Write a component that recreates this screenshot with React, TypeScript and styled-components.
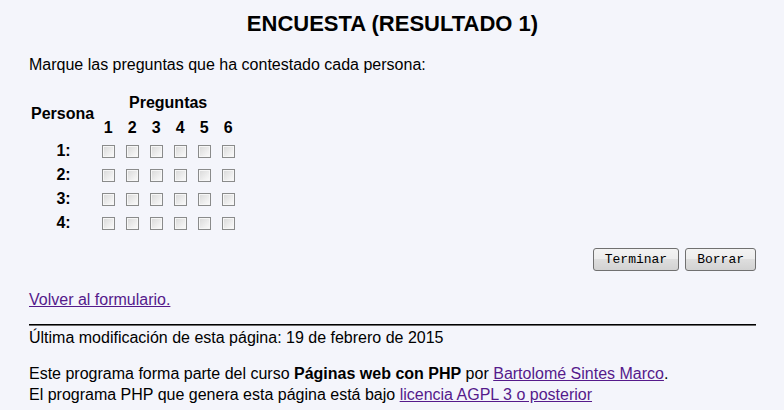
import React from "react";
import styled, { createGlobalStyle } from "styled-components";

const Global = createGlobalStyle`
  html, body { margin: 0; padding: 0; background: #f4f5fb; }
  body { font-family: "Liberation Sans", Arial, sans-serif; color: #000; }
`;

const Page = styled.div`
  padding: 0 28px 0 29px;
  font-size: 16px;
  line-height: 20px;
`;

const Title = styled.h1`
  margin: 0;
  padding-top: 12px;
  text-align: center;
  font-size: 22px;
  line-height: 24px;
  font-weight: bold;
`;

const Para = styled.p<{ $top?: number }>`
  margin: ${(p) => p.$top ?? 16}px 0 0 0;
  line-height: 20px;
`;

const Grid = styled.table`
  margin-top: 18px;
  margin-left: 0;
  border-collapse: separate;
  border-spacing: 0;
  font-weight: bold;
`;

const HeadCell = styled.th`
  padding: 0 0 5px 0;
  font-size: 16px;
  line-height: 20px;
  text-align: center;
  vertical-align: middle;
`;

const PersonaHead = styled.th`
  width: 63px;
  padding: 0 2px 4px 2px;
  font-size: 16px;
  line-height: 20px;
  text-align: center;
  vertical-align: middle;
`;

const NumCell = styled.th`
  width: 24px;
  padding: 0 0 1px 0;
  font-size: 16px;
  line-height: 20px;
  text-align: center;
`;

const RowLabel = styled.th`
  padding: 0 1px 0 3px;
  height: 24px;
  text-align: center;
  font-size: 16px;
`;

const BoxCell = styled.td`
  padding: 0;
  text-align: center;
  vertical-align: middle;
  height: 24px;
`;

const Check = styled.input.attrs({ type: "checkbox" })`
  appearance: none;
  -webkit-appearance: none;
  margin: 4px 0 0 0;
  width: 13px;
  height: 13px;
  box-sizing: border-box;
  border: 1px solid #8a8b8b;
  background: linear-gradient(135deg, #d8d8d8 0%, #ececec 55%, #fbfbfb 100%);
  box-shadow: inset 0 0 0 1px #f6f6f6;
  vertical-align: top;
`;

const Actions = styled.div`
  display: flex;
  justify-content: flex-end;
  gap: 6px;
  margin-top: 13px;
`;

const Button = styled.button`
  font-family: "Liberation Mono", "Courier New", monospace;
  font-size: 13px;
  height: 23px;
  padding: 0 11px;
  border: 1px solid #707070;
  border-radius: 3px;
  background: linear-gradient(#f3f3f3 0%, #ececec 50%, #dedede 50%, #d2d2d2 100%);
  color: #000;
`;

const Link = styled.a`
  color: #551a8b;
  text-decoration: underline;
`;

const Rule = styled.hr`
  margin: 14px 0 0 0;
  border: 0;
  border-top: 1px solid #000;
  box-shadow: 0 1px 0 #6a6a6a;
  height: 0;
`;

const Footer = styled.div`
  margin-top: 15px;
  line-height: 21px;
`;

export default function App() {
  const people = [1, 2, 3, 4];
  const qs = [1, 2, 3, 4, 5, 6];
  return (
    <>
      <Global />
      <Page>
        <Title>ENCUESTA (RESULTADO 1)</Title>
        <Para $top={19}>Marque las preguntas que ha contestado cada persona:</Para>
        <Grid>
          <thead>
            <tr>
              <PersonaHead rowSpan={2}>Persona</PersonaHead>
              <HeadCell colSpan={6}>Preguntas</HeadCell>
            </tr>
            <tr>
              {qs.map((q) => (
                <NumCell key={q}>{q}</NumCell>
              ))}
            </tr>
          </thead>
          <tbody>
            {people.map((p) => (
              <tr key={p}>
                <RowLabel>{p}:</RowLabel>
                {qs.map((q) => (
                  <BoxCell key={q}>
                    <Check aria-label={`Persona ${p} pregunta ${q}`} />
                  </BoxCell>
                ))}
              </tr>
            ))}
          </tbody>
        </Grid>
        <Actions>
          <Button>Terminar</Button>
          <Button>Borrar</Button>
        </Actions>
        <Para $top={19}>
          <Link href="#">Volver al formulario.</Link>
        </Para>
        <Rule />
        <Para $top={3}>Última modificación de esta página: 19 de febrero de 2015</Para>
        <Footer>
          Este programa forma parte del curso <b>Páginas web con PHP</b> por{" "}
          <Link href="#">Bartolomé Sintes Marco</Link>.
          <br />
          El programa PHP que genera esta página está bajo{" "}
          <Link href="#">licencia AGPL 3 o posterior</Link>
        </Footer>
      </Page>
    </>
  );
}
